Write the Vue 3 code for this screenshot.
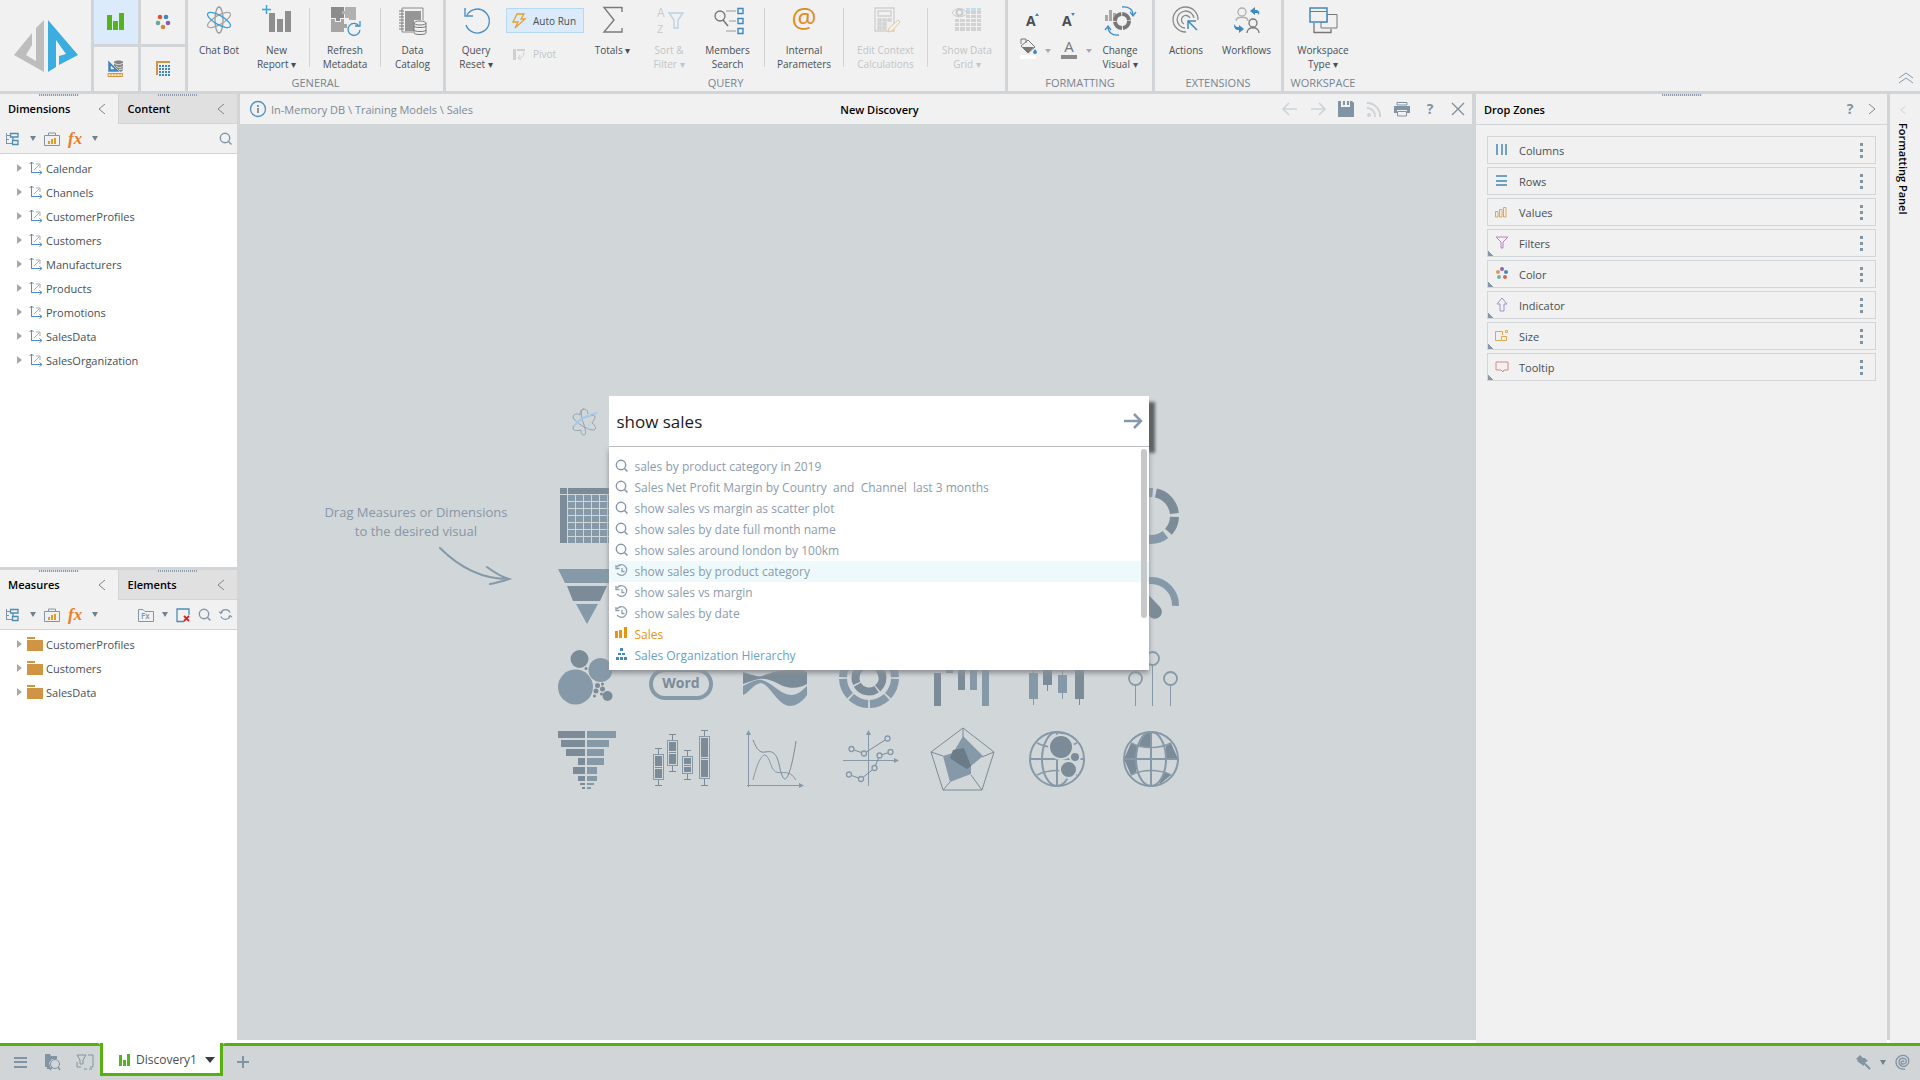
<template>
  <div class="shell">
    <header class="ribbon">
      <a class="logo" href="#" aria-label="Home">
        <svg viewBox="0 0 64 52" width="64" height="52">
          <path d="M30 0V52L0 35L18 13V25L12 35L22 41V8Z" fill="#bdbdbd" />
          <path d="M34 0L64 35L45 45V36L52 34L42 20V47L34 52Z" fill="#3badde" />
        </svg>
      </a>
      <div class="tiles">
        <button v-for="tile in tiles" :key="tile.icon" class="tile" :class="{ active: tile.active }" :aria-label="tile.label">
          <svg viewBox="0 0 18 18" width="18" height="18" v-html="icons[tile.icon]"></svg>
        </button>
      </div>

      <section v-for="group in groups" :key="group.name" class="group">
        <div class="group-items">
          <template v-for="(item, i) in group.items" :key="i">
            <span v-if="item.type === 'sep'" class="sep"></span>
            <div v-else-if="item.type === 'run'" class="run-stack">
              <button class="small-btn pressed">
                <svg viewBox="0 0 14 16" width="14" height="16" v-html="icons.bolt"></svg>Auto Run
              </button>
              <button class="small-btn" disabled>
                <svg viewBox="0 0 14 16" width="14" height="16" v-html="icons.pivot"></svg>Pivot
              </button>
            </div>
            <div v-else-if="item.type === 'format'" class="format-tools">
              <button aria-label="Increase font"><svg viewBox="0 0 22 22" width="22" height="22" v-html="icons.fontUp"></svg></button>
              <button aria-label="Decrease font"><svg viewBox="0 0 22 22" width="22" height="22" v-html="icons.fontDown"></svg></button>
              <button aria-label="Fill color"><svg viewBox="0 0 32 22" width="32" height="22" v-html="icons.fill"></svg></button>
              <button aria-label="Font color"><svg viewBox="0 0 32 22" width="32" height="22" v-html="icons.fontColor"></svg></button>
            </div>
            <button v-else class="item" :disabled="item.disabled" :style="{ width: item.width + 'px' }">
              <svg viewBox="0 0 32 32" width="32" height="32" v-html="icons[item.icon]"></svg>
              <span v-for="line in item.lines" :key="line">{{ line }}</span>
            </button>
          </template>
        </div>
        <h2>{{ group.name }}</h2>
      </section>
      <button class="collapse" aria-label="Collapse ribbon">
        <svg viewBox="0 0 16 12" width="16" height="12"><path d="M1 6L8 1L15 6M1 11L8 6L15 11" fill="none" stroke="#8799a8" /></svg>
      </button>
    </header>

    <main class="workspace">
      <aside class="side">
        <section v-for="panel in panels" :key="panel.tab" class="tree-panel" :class="panel.kind">
          <div class="tabs">
            <button class="tab current">{{ panel.tab }}<svg viewBox="0 0 8 12" width="8" height="12" v-html="icons.left"></svg></button>
            <button class="tab">{{ panel.other }}<svg viewBox="0 0 8 12" width="8" height="12" v-html="icons.left"></svg></button>
          </div>
          <div class="toolbar">
            <button aria-label="View"><svg viewBox="0 0 14 14" width="14" height="14" v-html="icons.outline"></svg></button>
            <span class="caret wide"></span>
            <button aria-label="Measures"><svg viewBox="0 0 16 14" width="16" height="14" v-html="icons.briefcase"></svg></button>
            <button class="fx" aria-label="Formula">fx</button>
            <span class="caret"></span>
            <span class="spacer"></span>
            <template v-if="panel.kind === 'measures'">
              <button aria-label="Formula folder"><svg viewBox="0 0 16 14" width="16" height="14" v-html="icons.fxFolder"></svg></button>
              <span class="caret"></span>
              <button aria-label="Clear"><svg viewBox="0 0 14 14" width="14" height="14" v-html="icons.clear"></svg></button>
            </template>
            <button aria-label="Search"><svg viewBox="0 0 13 13" width="13" height="13" v-html="icons.search"></svg></button>
            <button v-if="panel.kind === 'measures'" aria-label="Refresh"><svg viewBox="0 0 14 14" width="13" height="13" v-html="icons.sync"></svg></button>
          </div>
          <ul class="tree">
            <li v-for="name in panel.nodes" :key="name">
              <button>
                <i class="twisty"></i>
                <svg viewBox="0 0 16 14" width="16" height="14" v-html="icons[panel.nodeIcon]"></svg>
                {{ name }}
              </button>
            </li>
          </ul>
        </section>
      </aside>

      <section class="center">
        <div class="doc-head">
          <svg class="info" viewBox="0 0 18 18" width="18" height="18" v-html="icons.info"></svg>
          <span class="crumbs">In-Memory DB \ Training Models \ Sales</span>
          <h1>New Discovery</h1>
          <button v-for="name in docActions" :key="name" :aria-label="name">
            <svg viewBox="0 0 16 16" width="16" height="16" v-html="icons[name]"></svg>
          </button>
        </div>
        <div class="canvas">
          <div class="hint">
            <p>Drag Measures or Dimensions<br />to the desired visual</p>
            <svg viewBox="0 0 74 42" width="74" height="42">
              <path d="M2 2C22 22 46 33 70 33M49 21C57 27 64 31 71 33C65 35 58 37 52 38" fill="none" stroke="#8499a9" stroke-width="2" stroke-linecap="round" />
            </svg>
          </div>
          <form class="query" @submit.prevent>
            <svg class="atom" viewBox="0 0 28 28" width="28" height="28">
              <g fill="none" stroke="#93a3b1">
                <path d="M14 1C10 1 11 10 13 14C15 19 17 27 14 27C11 27 11 24 11 22C7 23 3 23 3 20C3 17 9 12 14 10C19 8 25 6 25 9C25 11 23 13 22 15C26 18 27 22 23 22C18 22 4 14 3 9C3 6 7 5 10 7C10 4 11 1 14 1C17 1 18 4 18 6" />
                <path d="M4 18C9 11 17 7 27 5" stroke="#a5cbec" stroke-width="2" />
                <path d="M19 6C20 13 19 20 16 26" stroke="#b3dedc" />
              </g>
            </svg>
            <div class="query-box">
              <input v-model="query" type="text" aria-label="Ask a question" />
              <button aria-label="Run query">
                <svg viewBox="0 0 20 18" width="20" height="18"><path d="M1 9H18M11 2L18 9L11 16" fill="none" stroke="#8499ab" stroke-width="2.5" /></svg>
              </button>
              <ul class="suggestions">
                <li v-for="s in suggestions" :key="s.text">
                  <button type="button" :class="[s.kind, { hot: s.hot }]">
                    <svg viewBox="0 0 13 13" width="13" height="13" v-html="icons[s.icon]"></svg>{{ s.text }}
                  </button>
                </li>
              </ul>
            </div>
          </form>
          <div class="visuals">
            <div v-for="(v, i) in visuals" :key="i" class="visual">
              <svg v-if="v" viewBox="0 0 60 60" width="60" height="60" v-html="v"></svg>
            </div>
          </div>
        </div>
      </section>

      <aside class="drop-zones">
        <div class="panel-head">
          <h2>Drop Zones</h2>
          <button aria-label="Help"><svg viewBox="0 0 16 16" width="16" height="16" v-html="icons.help"></svg></button>
          <button aria-label="Collapse"><svg viewBox="0 0 8 12" width="8" height="12"><path d="M1 1L7 6L1 11" fill="none" stroke="#7d8c99" /></svg></button>
        </div>
        <ul class="zones">
          <li v-for="zone in zones" :key="zone.name" :class="{ corner: zone.corner }">
            <svg viewBox="0 0 14 16" width="14" height="16" v-html="zone.icon"></svg>
            <span>{{ zone.name }}</span>
            <button :aria-label="zone.name + ' menu'"><svg viewBox="0 0 3 15" width="3" height="15"><path d="M0 0H3V3H0ZM0 6H3V9H0ZM0 12H3V15H0Z" fill="#8194a3" /></svg></button>
          </li>
        </ul>
      </aside>

      <aside class="format-panel">
        <button>
          <svg viewBox="0 0 8 12" width="6" height="12"><path d="M7 1L1 6L7 11" fill="none" stroke="#c3c9ce" /></svg>
          <span>Formatting Panel</span>
        </button>
      </aside>
    </main>

    <footer class="bottom">
      <div class="bottom-left">
        <button aria-label="Menu"><svg viewBox="0 0 16 14" width="16" height="14"><path d="M1 3H14M1 7H14M1 12H14" stroke="#8194a3" stroke-width="2" /></svg></button>
        <button aria-label="Find content"><svg viewBox="0 0 17 17" width="17" height="17" v-html="icons.findFolder"></svg></button>
        <button aria-label="Filter layout"><svg viewBox="0 0 18 16" width="18" height="16" v-html="icons.filterPane"></svg></button>
      </div>
      <button class="doc-tab">
        <svg viewBox="0 0 12 12" width="12" height="12"><path d="M0 1H3V12H0ZM4 6H7V12H4ZM8 0H11V12H8Z" fill="#55b41c" /></svg>
        Discovery1
        <i></i>
      </button>
      <div class="bottom-rest">
        <button aria-label="New tab"><svg viewBox="0 0 12 12" width="12" height="12"><path d="M6 0V12M0 6H12" stroke="#8194a3" stroke-width="2" /></svg></button>
        <span class="spacer"></span>
        <button aria-label="Connection"><svg viewBox="0 0 16 16" width="16" height="16"><path d="M1 5L5 1L8 4L10 4L13 7L9 9L9 12L6 10L2 7L3 6Z" fill="#8194a3" /><path d="M9 9L15 15" stroke="#8194a3" stroke-width="2" /></svg></button>
        <span class="caret"></span>
        <button aria-label="Status"><svg viewBox="0 0 16 16" width="16" height="16"><path d="M9 8A1.5 1.5 0 1 0 8 10C11 10 12 8 11 6C9 3 4 4 4 8C4 12 9 14 12 11C15 8 14 4 11 2C7 0 1 3 1 8C1 13 6 16 10 15" fill="none" stroke="#8194a3" stroke-width="1.3" /></svg></button>
      </div>
    </footer>
  </div>
</template>

<script setup>
import { ref } from 'vue'

const query = ref('show sales')

// Blue-grey tones shared by the chart thumbnails
const L = '#8699a8'
const D = '#7b8b98'

const icons = {
  tileBars: '<path d="M0 2H5V17H0ZM6 8H11V17H6ZM12 0H17V17H12Z" fill="#55b41c"/>',
  tileDots: '<circle cx="6" cy="4" r="2.3" fill="#dd5434"/><circle cx="12" cy="4" r="2.3" fill="#3f8ac4"/><circle cx="4" cy="10" r="2.3" fill="#62ae9c"/><circle cx="14" cy="10" r="2.3" fill="#8b5cab"/><circle cx="9" cy="14" r="2.3" fill="#d98436"/>',
  tileModel: '<path d="M7 2C7 0 16 0 16 2V10C16 11 13 12 13 12L7 6Z" fill="#848484"/><path d="M7 3C9 5 14 5 16 3M9 6C11 8 14 8 16 6M12 9.500L16 9" stroke="#e4e4e4" fill="none"/><path d="M1 0L13 12H1ZM4 6V9H7Z" fill="#3f86bd" fill-rule="evenodd" stroke="#f1f1f1" stroke-width=".5"/><path d="M1 13.500H15.500V16.500H1Z" fill="#f7e3c5" stroke="#cf9543"/><path d="M4 14V15.500M7 14V15.500M10 14V15.500M13 14V15.500" stroke="#cf9543"/>',
  tileGrid: '<path d="M2 1H16V3H4V15H2Z" fill="#cf9543"/><path d="M5 5H16V16H5Z" fill="#3f86bd"/><path d="M7.500 5V16M10.500 5V16M13.500 5V16M5 7.500H16M5 10.500H16M5 13.500H16" stroke="#f1f1f1"/>',
  atom: '<g fill="none" stroke-width="1.3"><ellipse cx="16" cy="16" rx="4" ry="13" stroke="#9a9a9a"/><ellipse cx="16" cy="16" rx="13" ry="4.500" transform="rotate(-30 16 16)" stroke="#a7a7a7"/><ellipse cx="16" cy="16" rx="13" ry="4.500" transform="rotate(30 16 16)" stroke="#3c9fdd"/></g>',
  newReport: '<path d="M1 5.500H10M5.500 1V10" stroke="#35a5da" stroke-width="1.400"/><path d="M8 9H14V28H8ZM16 15H22V28H16ZM24 7H30V28H24Z" fill="#8f8f8f"/>',
  puzzle: '<path d="M2 3H15V14H11V17H7V14H2Z" fill="#8c8c8c"/><path d="M16 3H27V16H20V14H16V10H13V7H16Z" fill="#b1b1b1"/><path d="M2 15H6V18H12V15H15V20H18V24H15V28H2Z" fill="#a5a5a5"/><path d="M30 22A6 6 0 1 0 31 26M31 17V22H26" fill="none" stroke="#3f92cf" stroke-width="1.300"/>',
  catalog: '<path d="M5 4H26V16M5 4V28H16" fill="none" stroke="#8a8a8a"/><path d="M8 7H24V16H17V27H8Z" fill="#969696"/><path d="M2 7H7M2 10H7M2 13H7M2 16H7M2 19H7M2 22H7M2 25H7" stroke="#777"/><g fill="#f1f1f1" stroke="#777"><path d="M17 19V29C17 31 29 31 29 29V19"/><path d="M17 22C17 24 29 24 29 22M17 26C17 28 29 28 29 26" fill="none"/><ellipse cx="23" cy="19" rx="6" ry="2"/></g>',
  reset: '<path d="M7 11A12 12 0 1 1 6 21M5 4V12H13" fill="none" stroke="#4a90c8" stroke-width="1.400"/>',
  bolt: '<path d="M5 1H12L9 6H13L3 15L6 9H1Z" fill="none" stroke="#e5a12c" stroke-width="1.300"/>',
  pivot: '<path d="M1 3H4V14H1ZM5 3H13V5H5Z" fill="#cfcfcf"/><path d="M12 6C12 10 10 12 6 12M8 9L6 12L9 14" fill="none" stroke="#cfcfcf"/>',
  sigma: '<path d="M25 8V3.500H7L17 16L7 28H25V24" fill="none" stroke="#7b7b7b" stroke-width="1.400"/>',
  sortFilter: '<text x="4" y="13" font-size="12" fill="#cacaca" font-family="Open Sans">A</text><text x="4" y="29" font-size="11" fill="#cacaca" font-family="Open Sans">Z</text><path d="M16 9H30L25 16V24H21V16Z" fill="none" stroke="#b8d4e4" stroke-width="1.300"/>',
  members: '<circle cx="8" cy="12" r="5" fill="none" stroke="#777" stroke-width="1.300"/><path d="M11 16L16 22" stroke="#777" stroke-width="1.500"/><path d="M14 7H24M17 17H24M14 27H24" stroke="#999"/><path d="M26 4.500H31V9.500H26ZM26 14.500H31V19.500H26ZM26 24.500H31V29.500H26Z" fill="none" stroke="#3f89c0" stroke-width="1.400"/>',
  at: '<text x="16" y="24" font-size="28" text-anchor="middle" fill="#e08c1d" font-family="Open Sans">@</text>',
  calc: '<g fill="none" stroke="#cfcfcf" stroke-width="1.300"><path d="M5 4H24V27H5ZM8 7H21V12H8Z"/><path d="M8 15H11V17H8ZM13 15H16V17H13ZM18 15H21V17H18ZM8 19H11V21H8ZM13 19H16V21H13ZM8 23H11V25H8ZM13 23H16V25H13Z"/></g><path d="M18 28L19 24L28 16L30 18L22 27Z" fill="#f1f1f1" stroke="#ecc79b"/>',
  showGrid: '<path d="M4 15H30V27H4ZM15 5H30V14H15Z" fill="#d2d2d2"/><path d="M15 4H30V7H15Z" fill="#c8dce8"/><path d="M8.500 14V28M14.500 14V28M19.500 4V28M25.500 4V28M3 18.500H30M3 22.500H30M15 10.500H30" stroke="#f1f1f1"/><path d="M1 9C4 3 13 3 16 9C13 14 4 14 1 9Z" fill="#f1f1f1" stroke="#cbcbcb"/><circle cx="8.500" cy="8.500" r="3" fill="none" stroke="#cbcbcb" stroke-width="2"/>',
  fontUp: '<text x="6" y="14" font-size="14" font-weight="700" fill="#4c4c4c" font-family="Open Sans">A</text><path d="M15 4L17 1L19 4Z" fill="#3c88c0"/>',
  fontDown: '<text x="1" y="14" font-size="14" font-weight="700" fill="#4c4c4c" font-family="Open Sans">A</text><path d="M10 1L14 1L12 4Z" fill="#3c88c0"/>',
  fill: '<path d="M1 8L8 2L15 9L8 15Z" fill="#f1f1f1" stroke="#777"/><path d="M2 9H14L8 15Z" fill="#777"/><path d="M1 6V1H6V5" fill="none" stroke="#777"/><path d="M15 11L17 14A2 2 0 1 1 13 14Z" fill="#3c88c0"/><path d="M0 17H16V21H0Z" fill="#fff"/><path d="M25 11H31L28 15Z" fill="#aaa"/>',
  fontColor: '<text x="8" y="14" font-size="15" text-anchor="middle" fill="#777" font-family="Open Sans">A</text><path d="M0 17H16V21H0Z" fill="#8a8a8a"/><path d="M25 11H31L28 15Z" fill="#aaa"/>',
  changeVisual: '<path d="M1 11H4V17H1ZM5 6H8V17H5ZM9 9H12V12L9 17Z" fill="#a8a8a8"/><circle cx="18" cy="17" r="7" fill="none" stroke="#777" stroke-width="4" stroke-dasharray="10 1"/><path d="M18 3C25 2 29 6 29 11M26 8L29 12L32 8M15 31C8 32 4 28 4 23M1 26L4 22L7 26" fill="none" stroke="#3c92ce" stroke-width="1.300"/>',
  actions: '<g fill="none" stroke="#8a8a8a" stroke-width="1.300"><path d="M16 28A12.500 12.500 0 1 1 28 16"/><path d="M15 24A8.500 8.500 0 1 1 24 14"/><path d="M14 20A4.500 4.500 0 1 1 20 14"/></g><path d="M27 26L18 17M18 25V17H26" fill="none" stroke="#3f89c0" stroke-width="1.500"/>',
  workflows: '<g fill="none" stroke-width="1.300"><g stroke="#b0b0b0"><circle cx="11" cy="8" r="4"/><path d="M5 17C5 12 17 12 17 17"/></g><g stroke="#777"><circle cx="22" cy="19" r="4"/><path d="M16 29C16 22 28 22 28 29"/></g></g><path d="M19 7L24 3V6C28 6 29 8 28 11C27 9 26 9 24 9V11ZM13 25L8 29V26C4 26 3 24 3 20C5 23 6 23 8 23V21Z" fill="#3f89c0"/>',
  workspace: '<path d="M7 19V28.500H24V25" fill="none" stroke="#777" stroke-width="1.300"/><path d="M14 18V24H30V10.500H20V18Z" fill="#f1f1f1" stroke="#777"/><path d="M3 4H20V18H3Z" fill="#f1f1f1" stroke="#3f89c0" stroke-width="1.500"/><path d="M3 7.500H20" stroke="#3f89c0"/>',
  left: '<path d="M7 1L1 6L7 11" fill="none" stroke="#7d8790"/>',
  outline: '<path d="M1.500 1V12M1 3.500H5M1 11.500H7M1 7.500H4" fill="none" stroke="#7f93a3"/><path d="M5.500 1.500H13V5H5.500ZM7.500 8.500H13V12.500H7.500ZM8 5V8" fill="none" stroke="#4e8db5" stroke-width="1.300"/>',
  briefcase: '<path d="M.5 3.500H15.500V13.500H.5ZM4.500 3V1H11.500V3" fill="none" stroke="#8496a5"/><path d="M4 9H6V12H4ZM7 7H9V12H7ZM10 6H12V12H10Z" fill="#e59a22"/>',
  fxFolder: '<path d="M.5 13.500V1.500H5L7 3.500H15.500V13.500Z" fill="none" stroke="#8496a5"/><text x="3" y="11" font-size="8" fill="#8496a5" font-family="Open Sans" font-weight="600">Fx</text>',
  clear: '<path d="M8 13.500H1V1H13V7" fill="none" stroke="#4e8db5" stroke-width="1.300"/><path d="M8 8L13 13M13 8L8 13" stroke="#e0201b" stroke-width="1.800"/>',
  search: '<circle cx="6" cy="6" r="4.700" fill="none" stroke="#8496a8" stroke-width="1.400"/><path d="M9.500 9.500L12.500 12.500" stroke="#8496a8" stroke-width="1.500"/>',
  history: '<path d="M2 3A5.300 5.300 0 1 1 2 9M1 1V4.500H4.500M7 4V7.500H9.500" fill="none" stroke="#8f9fae" stroke-width="1.300"/>',
  bars: '<path d="M0 4H3V11H0ZM4 3H7V11H4ZM9 0H12V11H9Z" fill="#e8940f"/>',
  hierarchy: '<path d="M5 0H8V3H5ZM3 5H6V7H3ZM7 5H10V7H7ZM1 9H4V12H1ZM5 9H8V12H5ZM9 9H12V12H9Z" fill="#4189be"/>',
  sync: '<path d="M2 5A5.500 5.500 0 0 1 12 5M12 9A5.500 5.500 0 0 1 2 9M0 4L2 6L4 4M10 10L12 8L14 10" fill="none" stroke="#8496a8" stroke-width="1.200"/>',
  axes: '<path d="M4.500 12V1M2.500 3L4.500 1L6.500 3M4 11.500H15M12.500 9.500L15 11.500L12.500 13.500" fill="none" stroke="#4e8fc5"/><path d="M7 9L12 4M9 3H13V7" fill="none" stroke="#aaa"/>',
  folder: '<path d="M0 0H8V2H0ZM0 3H16V14H0Z" fill="#cf9544"/>',
  info: '<circle cx="9" cy="9" r="7.500" fill="none" stroke="#4e8fc5" stroke-width="1.300"/><path d="M9 8V13M9 5V7" stroke="#63798a" stroke-width="1.500"/>',
  back: '<path d="M15 8H1M7 2L1 8L7 14" fill="none" stroke="#cdd3d7" stroke-width="1.500"/>',
  forward: '<path d="M1 8H15M9 2L15 8L9 14" fill="none" stroke="#cdd3d7" stroke-width="1.500"/>',
  save: '<path d="M0 0H3V6H12V0H14L16 2V16H0ZM5 0H7V4H5ZM9 0H11V4H9Z" fill="#8094a5"/>',
  feed: '<circle cx="3" cy="14" r="2" fill="#cdd3d7"/><path d="M1 7A8 8 0 0 1 9 16M1 2A13 13 0 0 1 14 16" fill="none" stroke="#cdd3d7" stroke-width="2"/>',
  print: '<path d="M3 1.500H13V4H3Z" fill="none" stroke="#8094a5"/><path d="M0 5H16V12H13V9H3V12H0Z" fill="#8094a5"/><path d="M3.500 10.500H12.500V15H3.500Z" fill="#f1f1f1" stroke="#8094a5"/>',
  help: '<text x="8" y="13" font-size="14" font-weight="700" text-anchor="middle" fill="#8094a5" font-family="Open Sans">?</text>',
  close: '<path d="M2 2L14 14M14 2L2 14" stroke="#7d8c99" stroke-width="1.200"/>',
  findFolder: '<path d="M1 0H6L7 2H13V5H1ZM1 5H8L5 9L7 15H3V13H1Z" fill="#8194a3"/><circle cx="11" cy="10" r="4.500" fill="none" stroke="#8194a3"/><path d="M14 13L16 16M6 16L8 13" stroke="#8194a3" stroke-width="1.500"/>',
  filterPane: '<path d="M1 1H10L7 6V10H4V6ZM12 1H17V13H14M1 8V13H5M8 15H11M13 15H16" fill="none" stroke="#8194a3"/>'
}

const tiles = [
  { icon: 'tileBars', label: 'Discover', active: true },
  { icon: 'tileDots', label: 'Present' },
  { icon: 'tileModel', label: 'Model' },
  { icon: 'tileGrid', label: 'Formulate' }
]

const sep = { type: 'sep' }
const groups = [
  {
    name: 'GENERAL',
    items: [
      { icon: 'atom', lines: ['Chat Bot'], width: 62 },
      { icon: 'newReport', lines: ['New', 'Report ▾'], width: 53 },
      sep,
      { icon: 'puzzle', lines: ['Refresh', 'Metadata'], width: 58 },
      sep,
      { icon: 'catalog', lines: ['Data', 'Catalog'], width: 51 }
    ]
  },
  {
    name: 'QUERY',
    items: [
      { icon: 'reset', lines: ['Query', 'Reset ▾'], width: 60 },
      { type: 'run' },
      { icon: 'sigma', lines: ['Totals ▾'], width: 57 },
      { icon: 'sortFilter', lines: ['Sort &', 'Filter ▾'], width: 56, disabled: true },
      { icon: 'members', lines: ['Members', 'Search'], width: 61 },
      sep,
      { icon: 'at', lines: ['Internal', 'Parameters'], width: 66 },
      sep,
      { icon: 'calc', lines: ['Edit Context', 'Calculations'], width: 71, disabled: true },
      sep,
      { icon: 'showGrid', lines: ['Show Data', 'Grid ▾'], width: 66, disabled: true }
    ]
  },
  {
    name: 'FORMATTING',
    items: [{ type: 'format' }, { icon: 'changeVisual', lines: ['Change', 'Visual ▾'], width: 54 }]
  },
  {
    name: 'EXTENSIONS',
    items: [
      { icon: 'actions', lines: ['Actions'], width: 62 },
      { icon: 'workflows', lines: ['Workflows'], width: 59 }
    ]
  },
  { name: 'WORKSPACE', items: [{ icon: 'workspace', lines: ['Workspace', 'Type ▾'], width: 78 }] }
]

const panels = [
  {
    kind: 'dimensions',
    tab: 'Dimensions',
    other: 'Content',
    nodeIcon: 'axes',
    nodes: ['Calendar', 'Channels', 'CustomerProfiles', 'Customers', 'Manufacturers', 'Products', 'Promotions', 'SalesData', 'SalesOrganization']
  },
  {
    kind: 'measures',
    tab: 'Measures',
    other: 'Elements',
    nodeIcon: 'folder',
    nodes: ['CustomerProfiles', 'Customers', 'SalesData']
  }
]

const docActions = ['back', 'forward', 'save', 'feed', 'print', 'help', 'close']

const suggestions = [
  { icon: 'search', text: 'sales by product category in 2019' },
  { icon: 'search', text: 'Sales Net Profit Margin by Country  and  Channel  last 3 months' },
  { icon: 'search', text: 'show sales vs margin as scatter plot' },
  { icon: 'search', text: 'show sales by date full month name' },
  { icon: 'search', text: 'show sales around london by 100km' },
  { icon: 'history', text: 'show sales by product category', hot: true },
  { icon: 'history', text: 'show sales vs margin' },
  { icon: 'history', text: 'show sales by date' },
  { icon: 'bars', text: 'Sales', kind: 'measure' },
  { icon: 'hierarchy', text: 'Sales Organization Hierarchy', kind: 'dimension' }
]

const zones = [
  { name: 'Columns', icon: '<path d="M1 2H3V13H1ZM6 2H8V13H6ZM10 2H12V13H10Z" fill="#6fa1c4"/>' },
  { name: 'Rows', icon: '<path d="M1 2H12V4H1ZM1 7H12V9H1ZM1 11H12V13H1Z" fill="#6fa1c4"/>' },
  { name: 'Values', icon: '<path d="M.5 7.500H3V13H.5ZM4.500 5.500H7V13H4.500ZM8.500 3.500H11V13H8.500Z" fill="none" stroke="#e0a755"/>' },
  { name: 'Filters', corner: true, icon: '<path d="M1 2H13L8 7V13H6V7Z" fill="none" stroke="#bb82c0"/>' },
  { name: 'Color', corner: true, icon: '<circle cx="7" cy="3" r="2" fill="#8d67ae"/><circle cx="3" cy="6" r="2" fill="#dd9a55"/><circle cx="11" cy="6" r="2" fill="#4b88b8"/><circle cx="4" cy="11" r="2" fill="#7fb0a5"/><circle cx="10" cy="11" r="2" fill="#d3694f"/>' },
  { name: 'Indicator', corner: true, icon: '<path d="M7 1L12 7H9V14H5V7H2Z" fill="none" stroke="#9a93cf"/>' },
  { name: 'Size', corner: true, icon: '<path d="M7.500 7V3.500H.5V12.500H6M6.500 8.500H11.500V12.500H6.500ZM10.500 2.500H12.500V4.500H10.500Z" fill="none" stroke="#e0a755"/>' },
  { name: 'Tooltip', corner: true, icon: '<path d="M1 3H13V11H9L8 13L6 11H1Z" fill="none" stroke="#d78a83"/>' }
]

const rects = (list, fill) => list.map(([x, y, w, h]) => `<rect x="${x}" y="${y}" width="${w}" height="${h}" fill="${fill}"/>`).join('')
const dots = (list, fill) => list.map(([x, y, r]) => `<circle cx="${x}" cy="${y}" r="${r}" fill="${fill}"/>`).join('')
const rings = (list, r, w) => list.map(([x, y]) => `<circle cx="${x}" cy="${y}" r="${r}" fill="#d1d6d9" stroke="${L}" stroke-width="${w}"/>`).join('')

// Circular arc stroke between two angles, in degrees clockwise from 3 o'clock
function arc(cx, cy, r, w, from, to, color) {
  const at = (deg) => {
    const a = (deg * Math.PI) / 180
    return `${cx + r * Math.cos(a)} ${cy + r * Math.sin(a)}`
  }
  return `<path d="M${at(from)}A${r} ${r} 0 ${to - from > 180 ? 1 : 0} 1 ${at(to)}" fill="none" stroke="${color}" stroke-width="${w}"/>`
}

function tableVisual() {
  const cells = []
  for (let row = 0; row < 7; row++) {
    for (let col = 0; col < 6; col++) cells.push([11 + col * 8, 9 + row * 7, 7, 6])
  }
  return rects([[3, 2, 7, 6], [11, 2, 47, 6], [3, 9, 7, 48]], D) + rects(cells, L)
}

const donut = arc(30, 30, 23.5, 9, -78, -6, D) + arc(30, 30, 23.5, 9, 2, 42, D) + arc(30, 30, 23.5, 9, 52, 130, L) + arc(30, 30, 23.5, 9, 136, 274, L)
const pyramid = `<path d="M1 2H59L52 16H8ZM19 37H41L30 57Z" fill="${L}"/><path d="M10 19H50L43 34H16Z" fill="${D}"/>`
const gauge = arc(30, 38, 24.5, 7, -180, 2, L) + `<path d="M20 20L39 40A7 7 0 1 1 27 46Z" fill="${D}"/>`
const bubbles = dots([[18.5, 39, 17.5], [43.5, 22, 12]], L) + dots([[22.5, 11, 9], [29, 20.5, 1.5], [50.5, 48, 5], [40.5, 37.5, 2.5], [45.5, 36, 1.5], [45.5, 41, 2.5], [39, 43, 2.5], [44.5, 46, 1.5], [37.5, 48, 1.5]], D)
const word = `<rect x="0" y="22" width="60" height="28" rx="14" fill="none" stroke="${L}" stroke-width="4"/><text x="30" y="40" text-anchor="middle" font-size="14" font-weight="700" fill="${D}" font-family="Open Sans">Word</text>`
const stream = `<path d="M-2 24C8 27 12 29 17 28C28 24 34 22 44 22H56L62 24V36C56 40 46 41 38 38C28 33 22 30 14 31C8 32 4 34 -2 36Z" fill="${D}"/><path d="M-2 38C6 34 12 31 17 32C28 35 34 46 46 47C54 47 58 41 62 38V47C58 53 52 58 44 58C32 56 25 37 16 35C8 36 4 45 -2 47Z" fill="${L}"/>`
const sunburst =
  [[2, 43], [47, 88], [92, 133], [137, 178], [182, 268], [272, 358]].map(([a, b]) => arc(30, 30, 26, 8, a, b, L)).join('') +
  [[-90, 50], [56, 150], [156, 264]].map(([a, b]) => arc(30, 30, 13.5, 8, a, b, D)).join('')
const waterfall = rects([[1, 25, 7, 33], [13, 20, 7, 5], [25, 15, 7, 27]], D) + rects([[37, 15, 7, 27], [49, 10, 7, 48]], L)
const candles = rects([[2, 25, 9, 26], [6, 20, 1, 37], [31, 27, 9, 18], [35, 22, 1, 29]], L) + rects([[16, 15, 9, 22], [20, 12, 1, 31], [48, 15, 9, 36], [52, 12, 1, 45]], D)
const lollipop = rects([[14, 36, 1, 22], [31, 16, 1, 42], [49, 36, 1, 22]], L) + rings([[14.5, 30.5], [31.5, 10.5], [49.5, 30.5]], 6.5, 1.8)
const tornado =
  rects([[1, 2, 27, 7], [4, 11, 24, 7], [9, 20, 19, 7], [21, 29, 7, 7], [16, 38, 12, 7], [21, 47, 7, 5], [23, 54, 5, 2], [25, 58, 3, 2]], D) +
  rects([[30, 2, 29, 7], [30, 11, 22, 7], [30, 20, 17, 7], [30, 29, 17, 7], [30, 38, 10, 7], [30, 47, 10, 5], [30, 54, 7, 2], [30, 58, 4, 2]], L)
const boxplot = [[2, 25, 26, 19, 56, 37], [16, 11, 26, 5, 42, 22], [31, 27, 18, 21, 50, 35], [48, 7, 43, 1, 56, 28]]
  .map(([x, y, h, top, end, mid]) => `<path d="M${x + 5.5} ${top}V${y}M${x + 5.5} ${y + h}V${end}M${x + 2} ${top + 0.5}H${x + 9}M${x + 2} ${end + 0.5}H${x + 9}" stroke="${D}"/><rect x="${x + 0.5}" y="${y + 0.5}" width="10" height="${h - 1}" fill="none" stroke="${L}"/><rect x="${x + 2}" y="${y + 2}" width="7" height="${h - 4}" fill="${D}"/><path d="M${x + 2} ${mid + 0.5}H${x + 9}M${x + 2} ${mid + 2.5}H${x + 9}" stroke="#d1d6d9"/>`)
  .join('')
const curves = `<path d="M3.500 58V4M2 56.500H56" stroke="${L}" fill="none"/><path d="M1 6L3.500 1L6 6ZM54 54L59 56.500L54 59Z" fill="${L}"/><path d="M8 11C12 21 15 24 20 23C26 22 31 22 34 35C36 45 38 50 40 50C44 49 48 32 51 12" fill="none" stroke="${D}"/><path d="M8 51C12 35 16 26 20 26C26 28 25 43 33 43.500C42 44 45 42 51 51" fill="none" stroke="${L}"/>`
const scatter = `<path d="M29.500 57V5M4 31.500H56" stroke="${L}"/><path d="M27 6L29.500 1L32 6ZM55 29L60 31.500L55 34Z" fill="${L}"/><path d="M12.500 20L25 24.500L48.500 9.500M10 45.500L22 50L35.500 39L40.500 26.500L51.500 23" fill="none" stroke="${D}"/>` + rings([[12.5, 20], [25, 24.5], [48.5, 9.5], [10, 45.5], [22, 50], [35.5, 39], [40.5, 26.5], [51.5, 23]], 2.5, 1.3)
const radar = `<path d="M30 -1L61 23L49 61H10L-2 23ZM30 -1V8M61 23L49 28M49 61L38 46M10 61L17 53M-2 23L10 27" fill="none" stroke="${D}"/><path d="M30 7L50 27L38 37V45L17 53L10 27L20 24Z" fill="${L}"/><path d="M17 29L20 21L31 19L38 37L34 40L24 34Z" fill="#6b7b8a"/>`
const meridians = `<g fill="none" stroke="${L}"><circle cx="30" cy="30" r="27" stroke-width="2"/><ellipse cx="30" cy="30" rx="15" ry="27" stroke-width="2"/><path d="M3 30H57M30 3V57" stroke-width="2"/><path d="M10 14C22 20 38 20 50 14M10 46C22 40 38 40 50 46" stroke-width="1.500"/></g>`
const bubbleMap = meridians + [[34, 18, 12], [48, 28, 5], [41.5, 40.5, 8.5]].map(([x, y, r]) => `<circle cx="${x}" cy="${y}" r="${r}" fill="${D}" stroke="#d1d6d9" stroke-width="2"/>`).join('')
const shapeMap = `<path d="M30 3V19L18 17C20 9 24 4 30 3ZM45 17L50 14L57 30H45ZM10 14L17 18L15 30V43L10 46L3 30ZM43 43L50 46L38 56Z" fill="${D}"/>` + meridians

// Seven per row; null keeps a slot empty
const visuals = [
  tableVisual(), null, null, null, null, null, donut,
  pyramid, null, null, null, null, null, gauge,
  bubbles, word, stream, sunburst, waterfall, candles, lollipop,
  tornado, boxplot, curves, scatter, radar, bubbleMap, shapeMap
]
</script>

<style>
body {
  background: #fff;
}
</style>

<style scoped>
.shell {
  --line: #d1d5d8;
  --panel: #f1f1f1;
  --slate: #8094a5;
  display: flex;
  flex-direction: column;
  min-height: 100vh;
  font-family: "Open Sans", "Noto Sans", sans-serif;
  font-size: 11px;
  color: #474f55;
  background: #fff;
}

button {
  display: flex;
  align-items: center;
  border: 0;
  padding: 0;
  background: none;
  font: inherit;
  color: inherit;
  cursor: pointer;
}

svg {
  flex: none;
  overflow: visible;
}

ul {
  list-style: none;
  margin: 0;
  padding: 0;
}

h1,
h2,
p {
  margin: 0;
  font-size: inherit;
  font-weight: 400;
}

.spacer {
  flex: 1;
}

.caret {
  width: 0;
  border: 3px solid transparent;
  border-top: 5px solid #6f8290;
  border-bottom: 0;
}

/* Ribbon */
.ribbon {
  display: flex;
  height: 91px;
  background: var(--panel);
  border-bottom: 3px solid var(--line);
}

.logo {
  display: flex;
  width: 91px;
  justify-content: center;
  align-items: center;
}

.tiles {
  display: grid;
  grid-template-columns: 44px 44px;
  gap: 3px;
  padding: 0 3px;
  background: var(--line);
}

.tile {
  justify-content: center;
  background: var(--panel);
}

.tile.active {
  background: #dbebfb;
}

.group {
  display: flex;
  flex-direction: column;
  border-right: 3px solid var(--line);
}

.group:last-of-type {
  border-right: 0;
}

.group-items {
  display: flex;
  height: 75px;
  padding-right: 5px;
  font-size: 10px;
  line-height: 14px;
}

.group:last-of-type .group-items {
  padding-right: 0;
}

.group h2 {
  text-align: center;
  font-size: 11px;
  line-height: 16px;
  color: #77848d;
}

.item {
  flex-direction: column;
  padding-top: 4px;
  white-space: nowrap;
}

.item svg {
  margin-bottom: 7px;
}

button:disabled {
  color: #c2c5c7;
}

.sep {
  width: 1px;
  height: 59px;
  margin: 8px 6px;
  background: var(--line);
}

.run-stack {
  display: flex;
  flex-direction: column;
  gap: 8px;
  width: 78px;
  padding-top: 8px;
}

.small-btn {
  gap: 7px;
  height: 25px;
  padding: 0 5px;
  border: 1px solid transparent;
  white-space: nowrap;
}

.small-btn.pressed {
  background: #dbebfb;
  border-color: #b5d9f3;
}

.format-tools {
  display: grid;
  grid-template-columns: 41px 41px;
  grid-template-rows: 29px 24px;
  align-items: center;
  padding: 8px 0 0 4px;
  width: 85px;
  box-sizing: border-box;
}

.format-tools button {
  padding-left: 8px;
}

.collapse {
  align-self: flex-end;
  margin: 0 6px 7px auto;
}

/* Main area */
.workspace {
  display: flex;
  flex: 1;
  background: var(--line);
  gap: 3px;
  margin-bottom: 3px;
}

.side {
  display: flex;
  flex-direction: column;
  width: 237px;
  gap: 3px;
  margin-bottom: -3px;
}

.tree-panel {
  display: flex;
  flex-direction: column;
  flex: 1;
  background: #fff;
}

.tabs {
  display: flex;
  height: 30px;
}

.tab {
  position: relative;
  flex: 1;
  justify-content: space-between;
  padding: 0 12px 0 9px;
  background: #e0e0e0;
  border: 1px solid var(--line);
  border-width: 0 0 1px 1px;
  font-weight: 600;
  color: #000;
}

.tab.current {
  padding-left: 7px;
  background: var(--panel);
  border-color: var(--panel);
}

.tab::before,
.panel-head::before {
  content: "";
  position: absolute;
  top: 0;
  left: calc(50% - 20px);
  width: 40px;
  height: 2px;
  background: repeating-linear-gradient(90deg, #8f9dab 0 1px, #dfe3e6 1px 2px);
}

.toolbar {
  display: flex;
  align-items: center;
  gap: 8px;
  height: 29px;
  padding: 0 5px;
  background: var(--panel);
  border-bottom: 1px solid var(--line);
}

.caret.wide {
  margin-left: 3px;
}

.fx {
  padding-right: 2px;
  font: italic 700 17px/20px "Liberation Serif", serif;
  color: #ea7d2b;
}

.tree {
  padding-top: 2px;
}

.tree button {
  height: 24px;
  gap: 3px;
  padding-left: 17px;
}

.tree svg {
  margin-left: 2px;
}

.twisty {
  border: 4px solid transparent;
  border-left: 5px solid #a9a9a9;
  border-right: 0;
}

.center {
  display: flex;
  flex-direction: column;
  flex: 1;
}

.doc-head {
  display: flex;
  align-items: center;
  height: 30px;
  background: var(--panel);
}

.info {
  margin: 0 4px 0 9px;
}

.crumbs {
  margin-right: 10px;
  color: #7d8a94;
}

.doc-head h1 {
  flex: 1;
  text-align: center;
  font-weight: 600;
  color: #000;
}

.doc-head button {
  width: 28px;
  justify-content: center;
}

.canvas {
  flex: 1;
  display: grid;
  grid-template-columns: 12fr 658px 11fr;
  grid-template-rows: 51px 324px;
  row-gap: 28px;
  align-content: center;
  padding: 31px 0 0 2px;
  background: #d1d6d9;
}

.hint {
  grid-column: 1;
  grid-row: 2;
  display: flex;
  flex-direction: column;
  align-items: flex-end;
  padding: 28px 28px 0 0;
  color: #8797a5;
}

.hint p {
  margin-right: 5px;
  font-size: 13px;
  line-height: 19px;
  text-align: center;
}

.hint svg {
  margin-top: 5px;
}

.query {
  grid-column: 2;
  grid-row: 1;
  display: flex;
  align-items: center;
  gap: 11px;
  padding-left: 30px;
}

.query-box {
  position: relative;
  display: flex;
  width: 540px;
  height: 50px;
  background: #fff;
  border-bottom: 1px solid #c0c4c8;
  box-shadow: 6px 6px 3px #5e6264;
}

.query-box input {
  flex: 1;
  border: 0;
  padding: 0 7px;
  outline: 0;
  background: none;
  font-family: inherit;
  font-size: 17px;
  color: #1c1c1c;
}

.query-box > button {
  padding: 0 6px;
}

.suggestions {
  position: absolute;
  z-index: 2;
  top: 51px;
  left: 0;
  right: 0;
  padding: 9px 0 4px;
  background: #fff;
  box-shadow: 0 3px 5px #8a8f93;
}

.suggestions::after {
  content: "";
  position: absolute;
  top: 2px;
  right: 2px;
  width: 6px;
  height: 169px;
  border-radius: 3px;
  background: #c6c8c9;
}

.suggestions button {
  width: 100%;
  height: 21px;
  gap: 6px;
  padding-left: 6px;
  font-size: 12px;
  color: #8b9bab;
  white-space: pre;
}

.suggestions svg {
  margin-bottom: 3px;
}

.suggestions .hot {
  background: #eef9fc;
}

.suggestions .measure {
  color: #e8940f;
}

.suggestions .dimension {
  color: #6a9fc8;
}

.visuals {
  grid-column: 2;
  grid-row: 2;
  display: grid;
  grid-template-columns: repeat(7, 94px);
  grid-auto-rows: 81px;
}

.visual {
  display: flex;
  align-items: center;
  justify-content: center;
}

/* Right side */
.drop-zones {
  width: 411px;
  margin: 0 0 -3px 1px;
  background: var(--panel);
}

.panel-head {
  position: relative;
  display: flex;
  align-items: center;
  gap: 10px;
  height: 30px;
  padding: 0 11px 0 8px;
  border-bottom: 1px solid var(--line);
}

.panel-head h2 {
  flex: 1;
  font-weight: 600;
  color: #000;
}

.zones {
  display: flex;
  flex-direction: column;
  gap: 3px;
  padding: 11px;
}

.zones li {
  display: flex;
  align-items: center;
  height: 26px;
  padding: 0 12px 0 7px;
  border: 1px solid #d3d6d8;
}

.zones .corner {
  background: linear-gradient(45deg, #8799a8 0 4px, transparent 4px);
}

.zones span {
  flex: 1;
  padding-left: 10px;
}

.format-panel {
  width: 30px;
  margin-bottom: -3px;
  background: var(--panel);
}

.format-panel button {
  flex-direction: column;
  gap: 7px;
  width: 26px;
  padding-top: 10px;
  font-weight: 600;
  color: #000;
}

.format-panel span {
  writing-mode: vertical-rl;
}

/* Bottom bar */
.bottom {
  display: flex;
  height: 37px;
  background: var(--line);
}

.bottom-left,
.bottom-rest {
  display: flex;
  align-items: center;
  border-top: 3px solid #55b010;
  padding-bottom: 2px;
}

.bottom-left {
  gap: 15px;
  width: 87px;
  padding-left: 13px;
  border-top-right-radius: 3px;
}

.doc-tab {
  gap: 5px;
  height: 33px;
  box-sizing: border-box;
  padding: 3px 5px 0 16px;
  border: 3px solid #55b010;
  border-top: 0;
  background: #fff;
  font-size: 12px;
}

.doc-tab i {
  margin-left: 3px;
  border: 5px solid transparent;
  border-top: 6px solid #3c3c3c;
  border-bottom: 0;
}

.bottom-rest {
  flex: 1;
  gap: 9px;
  padding-left: 14px;
  padding-right: 9px;
  border-top-left-radius: 3px;
}
</style>
